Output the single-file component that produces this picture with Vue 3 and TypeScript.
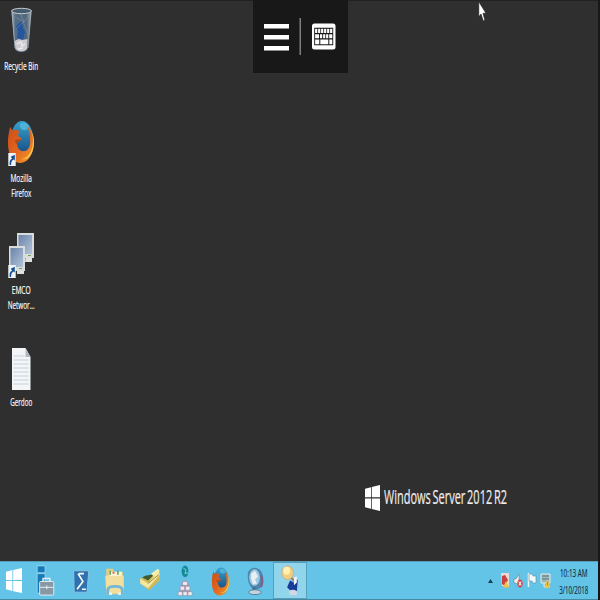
<script setup lang="ts">
interface LabelLine { text: string; width: number }
interface Shortcut { id: string; lines: LabelLine[] }

const shortcuts: Shortcut[] = [
  { id: 'bin', lines: [{ text: 'Recycle Bin', width: 34 }] },
  { id: 'firefox', lines: [{ text: 'Mozilla', width: 21.5 }, { text: 'Firefox', width: 20 }] },
  { id: 'emco', lines: [{ text: 'EMCO', width: 19 }, { text: 'Networ...', width: 27 }] },
  { id: 'doc', lines: [{ text: 'Gerdoo', width: 22 }] },
]
const keyCols: number[] = [0, 1, 2, 3, 4, 5]
const ruleRows: number[] = [0, 1, 2, 3, 4, 5, 6, 7]
</script>

<template>
  <div class="screen">
    <svg class="defs" width="0" height="0">
      <defs>
        <linearGradient id="glass" x1="0" x2="1" y1="0" y2="0">
          <stop offset="0" stop-color="#a9b4bd" /><stop offset=".2" stop-color="#536d86" />
          <stop offset=".75" stop-color="#52687c" /><stop offset="1" stop-color="#a5b0b8" />
        </linearGradient>
        <linearGradient id="fox" x1="0" x2="1" y1="0" y2="1">
          <stop offset="0" stop-color="#c94d18" /><stop offset=".5" stop-color="#e3641f" /><stop offset="1" stop-color="#f3a02c" />
        </linearGradient>
        <linearGradient id="globe" x1="0" x2="0" y1="0" y2="1">
          <stop offset="0" stop-color="#36a2cf" /><stop offset="1" stop-color="#123d75" />
        </linearGradient>
        <linearGradient id="lcd" x1="0" x2="1" y1="0" y2="1">
          <stop offset="0" stop-color="#6983a8" /><stop offset="1" stop-color="#b4c4d9" />
        </linearGradient>
        <symbol id="ff" viewBox="0 0 26 44">
          <ellipse cx="14" cy="21" rx="11.5" ry="20" fill="url(#globe)" />
          <path d="M12 4c4-3 9 0 10 5-3-1-4 2-6 1-2 0-5-2-4-6Z" fill="#58bfe0" opacity=".7" />
          <path d="M2 7c1 1 2 3 3 4 2-2 4-1 6 0l-1 5 4 3-5 4c0 5 3 9 7 8 4 0 7-5 6-12 0-5-1-9-3-13 6 5 8 14 6 23-2 9-7 14-13 14C4 43 0 34 0 23 0 16 1 12 2 7Z" fill="url(#fox)" />
          <path d="M21 8c4 5 5 13 3 20-2 7-6 11-11 11 8 2 13-6 13-17 0-6-2-11-5-14Z" fill="#f6c64a" />
          <path d="m7 20 5-1 1 1-3 2-2 2Z" fill="#b0461b" />
        </symbol>
        <symbol id="win" viewBox="0 0 16 24">
          <path d="M0 3.500 6.400 2v9.400H0ZM7.200 1.800 16 0v11.400H7.200ZM0 12.400h6.400V22L0 20.500ZM7.200 12.400H16V24l-8.800-1.800Z" fill="#fff" />
        </symbol>
        <symbol id="arrow" viewBox="0 0 8 14">
          <path d="M0 0h8v14H0Z" fill="#eef3f8" />
          <path d="M1.500 13c-.4-4 .4-6 2.600-7L2.600 4 7 2v6L5.600 7C3.500 8.500 3 10 3 13Z" fill="#174f94" />
        </symbol>
      </defs>
    </svg>

    <main class="desktop">
      <ul class="shortcuts">
        <li v-for="item in shortcuts" :key="item.id" class="shortcut">
          <svg class="picture" width="42" height="56" viewBox="0 0 42 56">
            <g v-if="item.id === 'bin'">
              <path d="M11.500 12 14.800 49q.3 4 6.500 4t6.500-4L31.500 12Z" fill="url(#glass)" />
              <path d="m18 25 4-3 1 7 2 4-2 8-6-2 1-7-2-4Z" fill="#2455a0" />
              <path d="m20 14 4 9 5-7M15 18l8 4 5 14M16 30l8-8" fill="none" stroke="#8497a7" stroke-width=".5" />
              <path d="m14.500 42 4-2 4 1 5-1-.5 10q-5.700 5-11.500 0Z" fill="#cdccd0" />
              <path d="m17 45 4-2 1 4 3-2M18 50l5-1" fill="none" stroke="#f1edeb" stroke-width="1.300" />
              <ellipse cx="21.500" cy="12" rx="10" ry="2.700" fill="#465b6d" stroke="#c7ccd0" />
              <path d="M12 14 15 49M31 14l-3 35" stroke="#a5adb3" stroke-width=".8" />
            </g>
            <g v-else-if="item.id === 'firefox'">
              <use href="#ff" x="8" y="9" width="26" height="44" />
              <use href="#arrow" x="8" y="42" width="8" height="13" />
            </g>
            <g v-else-if="item.id === 'emco'" transform="translate(0 1)">
              <path d="M25.500 33h6.500v5h-7Z" fill="#dde1df" />
              <path d="M17 9h17v25H17Z" fill="#d8dcda" /><path d="M18.500 11H32v19H18.500Z" fill="url(#lcd)" />
              <path d="M17 45h7v5h-7Z" fill="#dde1df" />
              <path d="M9 22h16v25H9Z" fill="#d8dcda" /><path d="M10.500 24H23v19H10.500Z" fill="url(#lcd)" />
              <path d="M28 31.500h3M19 44.500h3" stroke="#71a35e" />
              <use href="#arrow" x="8" y="41" width="8" height="13" />
            </g>
            <g v-else transform="translate(0 1)">
              <path d="M12 12h13.500l5 9v33H12Z" fill="#f4f5f7" />
              <path d="M25.500 12v9h5Z" fill="#b1b7bd" />
              <path v-for="n in ruleRows" :key="n" :d="`M13.500 ${20 + n * 4}h${n === 0 ? 11 : 15}`" stroke="#b7c6d5" stroke-width=".8" />
            </g>
          </svg>
          <svg class="caption" width="42" height="45" viewBox="0 0 42 45">
            <text v-for="(line, i) in item.lines" :key="line.text" :x="21.200 - line.width / 2" :y="13.800 + i * 14.800" :textLength="line.width" lengthAdjust="spacingAndGlyphs">{{ line.text }}</text>
          </svg>
        </li>
      </ul>

      <div class="session-bar">
        <svg width="95" height="73" viewBox="0 0 95 73">
          <path d="M11 24h25v4.500H11ZM11 35h25v4.500H11ZM11 46h25v4.500H11Z" fill="#fff" />
          <path d="M47.200 18v37" stroke="#999" stroke-width="1.200" />
          <rect x="59" y="23.500" width="23.500" height="26" rx="2.500" fill="#fff" />
          <path d="M61.200 27.800h19v17.500h-19Z" fill="#181818" />
          <rect v-for="n in keyCols" :key="n" :x="62.100 + n * 3" y="28.800" width="2.200" height="4.200" fill="#fff" />
          <path d="M62.100 34.200h4v4h-4ZM67 34.200h2.200v4H67ZM70.100 34.200h2.200v4h-2.200ZM73.100 34.200h2.200v4h-2.200ZM76.200 34.200h3.100v4h-3.100ZM62.100 39.500h4.200v4.700h-4.200ZM67.300 39.500h8v4.700h-8ZM76.300 39.500h3v4.700h-3Z" fill="#fff" />
        </svg>
      </div>

      <div class="brand">
        <svg width="15" height="26" viewBox="0 0 16 24" preserveAspectRatio="none"><path d="M0 3.500 6.400 2v9.400H0ZM7.200 1.800 16 0v11.400H7.200ZM0 12.400h6.400V22L0 20.500ZM7.200 12.400H16V24l-8.800-1.800Z" fill="#fff" /></svg>
        <svg width="128" height="27" viewBox="0 0 128 27"><text x="4" y="20" textLength="123" lengthAdjust="spacingAndGlyphs">Windows Server 2012 R2</text></svg>
      </div>

      <svg class="pointer" width="9" height="21" viewBox="0 0 9 21">
        <path d="M.8.8v15l2.200-2.800L5.300 20l1.500-1L5 12.300h3Z" fill="#fff" stroke="#1c1c1c" stroke-width=".6" />
      </svg>
    </main>

    <footer class="taskbar">
      <div class="start"><svg width="16" height="25" viewBox="0 0 16 24" preserveAspectRatio="none"><use href="#win" width="16" height="24" /></svg></div>
      <div class="task">
        <svg viewBox="0 0 35 38">
          <path d="M9 4h8v7H9ZM9 12h8v20H9Z" fill="#1679b8" stroke="#c3e9f4" stroke-width=".6" />
          <path d="M15 20v-3h7v3" fill="none" stroke="#e4eef1" stroke-width="1.500" />
          <rect x="11.500" y="20" width="14.500" height="14" rx="1" fill="#8798a3" stroke="#e2edf0" />
          <path d="M12 26h13.500M18.800 24v4" stroke="#e9f2f4" />
        </svg>
      </div>
      <div class="task">
        <svg viewBox="0 0 35 38">
          <path d="M10.500 9H26l-1.800 22H11Z" fill="#2f72af" stroke="#8bc4df" />
          <path d="m15 12 5 8-6 8M19 28h4M16 12h5" fill="none" stroke="#fff" stroke-width="1.700" />
        </svg>
      </div>
      <div class="task">
        <svg viewBox="0 0 35 38">
          <path d="M8 10V7h7l1 3h9v23H8Z" fill="#e7cc7d" />
          <path d="M11 10h13v6H11Z" fill="#fff4d8" /><path d="M12 9v4M20 9v4" stroke="#4c9e60" stroke-width="1.500" /><path d="M14.500 11h2" stroke="#d36548" stroke-width="2" />
          <path d="M7 14h19v18H8Z" fill="#f2df9d" />
          <path d="M9.500 33v-4q0-4 7.500-4t7.500 4v4" fill="none" stroke="#72b8d8" stroke-width="3" />
          <path d="M11 34v-3h3v3M20 34v-3h3v3" fill="#e9f2ef" />
        </svg>
      </div>
      <div class="task">
        <svg viewBox="0 0 35 38">
          <path d="m7 17 4-1 4 2 10-9 2 3v7L16 29l-9-7Z" fill="#ceb958" />
          <path d="m7 17 8 5L26 9l1 4-12 14-8-5Z" fill="#f4e8a0" />
          <path d="m9 16 6 3 8-8-5 2-6 1Z" fill="#415c2c" /><path d="m15 22 11-9" stroke="#9f8e3d" />
          <path d="m18 12 7-5 2 2-6 6Z" fill="#f7edad" />
        </svg>
      </div>
      <div class="task">
        <svg viewBox="0 0 35 38">
          <ellipse cx="17" cy="9.500" rx="3.500" ry="6" fill="#168998" /><path d="m15 6 3 2-1 4 3-1" fill="none" stroke="#7dd5c4" />
          <path d="M17 16v4" stroke="#8bafc5" />
          <path d="m14 20 3-1 3 1 4 14H10Z" fill="#9d9bb4" />
          <g fill="#f0e8ee" stroke="#8b84a2" stroke-width=".5"><path d="M14.500 20h5v4h-5ZM12 25h4.500v4H12ZM17.500 25H22v4h-4.500ZM10 30.500h4.300v4H10ZM15 30.500h4.300v4H15ZM20 30.500h4.300v4H20Z" /></g>
        </svg>
      </div>
      <div class="task"><svg viewBox="0 0 35 38"><use href="#ff" x="8.500" y="5" width="18" height="30" /></svg></div>
      <div class="task">
        <svg viewBox="0 0 35 38">
          <path d="M10 10q5-7 12-2 6 7 2 17-4 5-10 2-6-7-4-17Z" fill="#4f86af" />
          <ellipse cx="16.500" cy="16" rx="5.500" ry="8.500" fill="#9ec9e4" />
          <path d="m13 12 4-3 3 6-3 3 2 4-4 1-2-6Z" fill="#e8f0f2" /><path d="M23 14q3 6 0 12" fill="none" stroke="#8a5a83" stroke-width="2" />
          <path d="M16 26v4" stroke="#456c8a" stroke-width="3" /><ellipse cx="17" cy="31" rx="6.500" ry="2.500" fill="#c1d3dc" stroke="#567d9a" />
        </svg>
      </div>
      <div class="task active">
        <svg viewBox="0 0 35 38">
          <path d="m18 16 4 4" stroke="#93764d" stroke-width="2" />
          <ellipse cx="14.500" cy="11" rx="6" ry="7" fill="#f3ce7f" stroke="#c5b08b" />
          <ellipse cx="13.500" cy="9" rx="3.500" ry="4" fill="#fff1b4" />
          <path d="m14 26 3-7 4 2 1-5 3 3-1 11-7-1Z" fill="#183b98" /><path d="m21 16 3-1v6l-3 3Z" fill="#f0f4f8" />
          <path d="M16 30q4-3 8 0v4h-7Z" fill="#d2d8e3" />
        </svg>
      </div>
      <div class="tray">
        <svg class="more" width="5" height="4" viewBox="0 0 5 4"><path d="M0 4 2.500 0 5 4Z" fill="#154154" /></svg>
        <svg width="10" height="17" viewBox="0 0 10 17"><path d="M1 1h8v13H2Z" fill="#ead9d5" /><path d="m2 4 3-1 3 5-3 6-3-2Z" fill="#c6423e" /><path d="m6 9 3.500 6.500H3Z" fill="#efc548" /></svg>
        <svg width="10" height="17" viewBox="0 0 10 17"><path d="M1 7h2l3-5v12l-3-3H1Z" fill="#eef2f2" stroke="#6b8998" stroke-width=".6" /><ellipse cx="7" cy="11.500" rx="2.700" ry="4" fill="#d14b4d" /><path d="m5.800 9.500 2.400 4m0-4-2.400 4" stroke="#fff" /></svg>
        <svg width="10" height="17" viewBox="0 0 10 17"><path d="M1.500 1v14" stroke="#eef8fa" stroke-width="1.500" /><path d="M2 2h3l1 2h3v7H6L5 9H2Z" fill="#f1f8f9" stroke="#678b9a" stroke-width=".6" /></svg>
        <svg width="11" height="17" viewBox="0 0 11 17"><path d="M1 2h9v9H1ZM4 11v4h5" fill="#a0b9b6" stroke="#e0eae8" /><path d="M2 4h7M2 7h7" stroke="#597680" /><path d="m7.500 7 3 8.500h-6Z" fill="#efc43d" /><path d="M7.500 10v3" stroke="#8e6c18" stroke-width=".7" /></svg>
      </div>
      <div class="clock">
        <svg width="32" height="36" viewBox="0 0 32 36">
          <text x="2" y="15" textLength="27.500" lengthAdjust="spacingAndGlyphs">10:13 AM</text>
          <text x="1.300" y="32" textLength="29" lengthAdjust="spacingAndGlyphs">3/10/2018</text>
        </svg>
      </div>
    </footer>
  </div>
</template>

<style>
body { margin: 0; background: #2f2f2f; }
</style>

<style scoped>
.screen { position: relative; box-sizing: border-box; display: flex; flex-direction: column; width: 600px; height: 600px; overflow: hidden; background: #2f2f2f; border-right: 2px solid #171717; font-family: "Open Sans", "Noto Sans", sans-serif; }
.screen svg { display: block; flex: none; overflow: visible; }
.defs { position: absolute; }
.desktop { position: relative; flex: 1; border-top: 1px solid #222; box-sizing: border-box; }
.shortcuts { display: flex; flex-direction: column; width: 42px; margin: 0; padding: 0; list-style: none; }
.shortcut { height: 112px; }
.shortcut:first-child .picture { margin-top: -1px; }
.shortcut:first-child { height: 111px; }
.shortcut .picture { transform: translateY(-1px); }
.caption text { fill: #fff; font-size: 10px; stroke: #fff; stroke-width: .15px; }
.session-bar { position: absolute; top: -1px; left: 253px; width: 95px; height: 73px; background: #181818; }
.brand { position: absolute; left: 365px; top: 483px; display: flex; align-items: center; }
.brand text { fill: #eee; font-size: 19.500px; word-spacing: -2px; stroke: #eee; stroke-width: .2px; }
.pointer { position: absolute; left: 477.500px; top: 0; }
.taskbar { display: flex; box-sizing: border-box; height: 39px; background: #63c4e8; border-top: 1px solid #579bb4; border-bottom: 1px solid #438aa5; }
.start { display: flex; align-items: center; width: 28px; padding-left: 6px; box-sizing: border-box; }
.task { width: 35px; height: 37px; flex: none; }
.task svg { width: 35px; height: 37px; }
.task.active { width: 34px; box-sizing: border-box; background: #91d5ec; box-shadow: inset 0 0 0 1px #559fba; }
.tray { display: flex; align-items: center; gap: 3.500px; margin-left: auto; }
.tray .more { margin-right: 3px; }
.clock { width: 32px; margin: 0 8px 0 7px; }
.clock text { fill: #102e3a; font-size: 11px; stroke: #102e3a; stroke-width: .15px; }
</style>
